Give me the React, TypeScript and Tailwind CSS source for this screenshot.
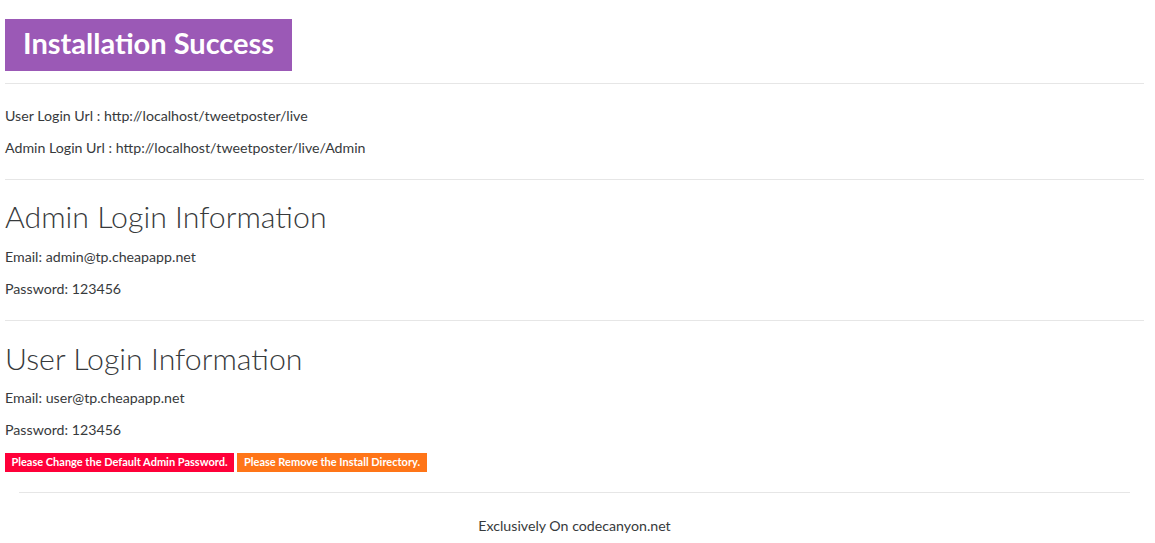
export default function App() {
  const font = { fontFamily: "Lato, 'Open Sans', sans-serif" };
  return (
    <div className="bg-white text-[#373a3c] min-h-[543px]" style={font}>
      <div className="px-[5px] pr-[11px]">
        <div className="pt-[19px]">
          <div className="inline-flex h-[52px] items-center bg-[#9b59b6] px-[18px] pb-[5px] text-[29px] font-bold text-white leading-none">
            Installation Success
          </div>
        </div>
        <div className="mt-[12px] border-t border-[#e6e6e6]" />
        <div className="pt-[21px] text-[14.2px] leading-[21px]">
          <p className="mb-[11px]">User Login Url : http://localhost/tweetposter/live</p>
          <p>Admin Login Url : http://localhost/tweetposter/live/Admin</p>
        </div>
        <div className="mt-[21px] border-t border-[#e6e6e6]" />
        <div className="pt-[20px]">
          <h2 className="text-[30.3px] font-light leading-[33px]">Admin Login Information</h2>
          <div className="mt-[13px] text-[14.2px] leading-[21px]">
            <p className="mb-[11px]">Email: admin@tp.cheapapp.net</p>
            <p>Password: 123456</p>
          </div>
        </div>
        <div className="mt-[21px] border-t border-[#e6e6e6]" />
        <div className="pt-[21px]">
          <h2 className="text-[30.3px] font-light leading-[33px]">User Login Information</h2>
          <div className="mt-[12px] text-[14.2px] leading-[21px]">
            <p className="mb-[11px]">Email: user@tp.cheapapp.net</p>
            <p>Password: 123456</p>
          </div>
          <div className="mt-[13px] flex gap-[3px]">
            <span className="inline-flex h-[19px] w-[229px] items-center justify-center bg-[#ff0039] text-[11px] font-bold text-white">
              Please Change the Default Admin Password.
            </span>
            <span className="inline-flex h-[19px] w-[190px] items-center justify-center bg-[#ff7518] text-[11px] font-bold text-white">
              Please Remove the Install Directory.
            </span>
          </div>
        </div>
      </div>
      <div className="px-[19px] pr-[25px]">
        <div className="mt-[20px] border-t border-[#e6e6e6]" />
        <p className="pt-[22px] text-center text-[14.2px] leading-[21px]">Exclusively On codecanyon.net</p>
      </div>
    </div>
  );
}
